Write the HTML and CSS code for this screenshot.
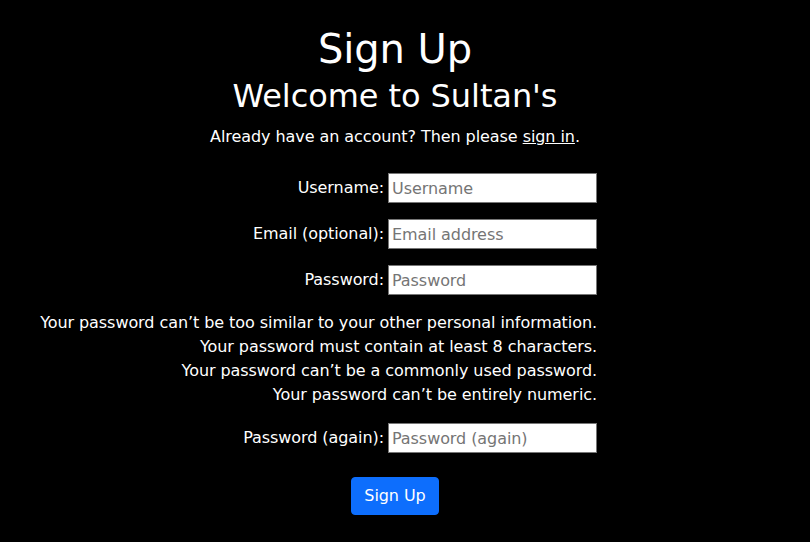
FILE: index.html
```html
<!DOCTYPE html>
<html lang="en">
<head>
<meta charset="utf-8">
<title>Sign Up</title>
<link rel="stylesheet" href="styles.css">
</head>
<body>
<main class="page">
  <h1 class="title">Sign Up</h1>
  <h2 class="subtitle">Welcome to Sultan's</h2>
  <p class="lead">Already have an account? Then please <a class="link" href="#">sign in</a>.</p>
  <form class="form">
    <div class="fields">
      <div class="row">
        <label class="label" for="username">Username:</label>
        <input class="input" id="username" type="text" placeholder="Username">
      </div>
      <div class="row">
        <label class="label" for="email">Email (optional):</label>
        <input class="input" id="email" type="email" placeholder="Email address">
      </div>
      <div class="row">
        <label class="label" for="password1">Password:</label>
        <input class="input" id="password1" type="password" placeholder="Password">
      </div>
      <ul class="help">
        <li>Your password can’t be too similar to your other personal information.</li>
        <li>Your password must contain at least 8 characters.</li>
        <li>Your password can’t be a commonly used password.</li>
        <li>Your password can’t be entirely numeric.</li>
      </ul>
      <div class="row">
        <label class="label" for="password2">Password (again):</label>
        <input class="input" id="password2" type="password" placeholder="Password (again)">
      </div>
    </div>
    <div class="actions">
      <button class="btn" type="submit">Sign Up</button>
    </div>
  </form>
</main>
</body>
</html>
```
FILE: styles.css
```css
html, body {
  margin: 0;
  padding: 0;
  background: #000;
}
body {
  color: #fff;
  font-family: "DejaVu Sans", "Noto Sans", sans-serif;
  font-size: 16px;
  line-height: 24px;
  letter-spacing: -0.07px;
}
.page {
  width: 790px;
  padding-top: 25px;
  text-align: center;
}
.title {
  margin: 0;
  font-size: 40px;
  line-height: 48px;
  font-weight: 400;
}
.subtitle {
  margin: 4px 0 0;
  font-size: 32px;
  line-height: 38px;
  font-weight: 400;
}
.lead {
  margin: 10px 0 0;
}
.link {
  color: #fff;
  text-decoration: underline;
}
.form {
  margin-top: 24px;
}
.fields {
  width: 597px;
  display: flex;
  flex-direction: column;
  align-items: flex-end;
  gap: 16px;
}
.row {
  display: flex;
  align-items: center;
  gap: 4px;
}
.label {
  white-space: nowrap;
}
.input {
  box-sizing: border-box;
  width: 209px;
  height: 30px;
  margin: 0;
  padding: 0 3px;
  border: 1px solid #767676;
  border-radius: 0;
  background: #fff;
  color: #000;
  font: inherit;
  letter-spacing: inherit;
}
.input::placeholder {
  color: #757575;
}
.help {
  list-style: none;
  margin: 0;
  padding: 0;
  text-align: right;
  white-space: nowrap;
}
.actions {
  display: flex;
  justify-content: center;
  margin-top: 24px;
}
.btn {
  box-sizing: border-box;
  height: 38px;
  padding: 6px 12px;
  border: 1px solid #0d6efd;
  border-radius: 4px;
  background: #0d6efd;
  color: #fff;
  font: inherit;
  letter-spacing: inherit;
  cursor: pointer;
}
```
